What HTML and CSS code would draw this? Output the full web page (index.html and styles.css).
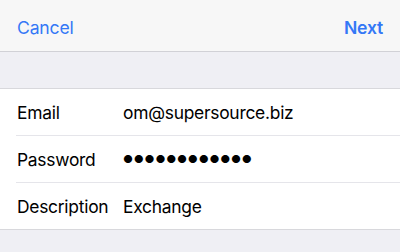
FILE: index.html
```html
<!DOCTYPE html>
<html lang="en">
<head>
  <meta charset="UTF-8">
  <title>Exchange</title>
  <link rel="stylesheet" href="styles.css">
</head>
<body>
  <div class="nav">
    <span class="nav-btn">Cancel</span>
    <span class="nav-btn bold">Next</span>
  </div>

  <div class="spacer"></div>

  <div class="group">
    <div class="row">
      <span class="label">Email</span>
      <span class="value">om@supersource.biz</span>
    </div>
    <div class="row">
      <span class="label">Password</span>
      <span class="value dots">●●●●●●●●●●●●</span>
    </div>
    <div class="row">
      <span class="label">Description</span>
      <span class="value">Exchange</span>
    </div>
  </div>
</body>
</html>
```

FILE: styles.css
```css
body {
  margin: 0;
  font-family: Inter, "Liberation Sans", sans-serif;
  background-color: #efeff4;
  color: #000;
}
.nav {
  height: 52px;
  box-sizing: border-box;
  background-color: #f7f7f7;
  border-bottom: 1px solid #d1d1d6;
  display: flex;
  justify-content: space-between;
  align-items: center;
  padding: 3px 17px 0;
}
.nav-btn {
  font-size: 17.6px;
  color: #3478f6;
  letter-spacing: -0.2px;
}
.nav-btn.bold {
  font-weight: 600;
}
.spacer {
  height: 36px;
}
.group {
  background-color: #fff;
  border-top: 1px solid #d8d8dc;
  border-bottom: 1px solid #d8d8dc;
  padding-left: 16px;
}
.row {
  height: 46px;
  display: flex;
  align-items: center;
  border-bottom: 1px solid #e5e5ea;
  font-size: 17.4px;
  letter-spacing: -0.25px;
}
.row:last-child {
  border-bottom: none;
}
.label {
  width: 106px;
  padding-left: 1px;
}
.dots {
  font-size: 11px;
  letter-spacing: 0.75px;
}
```
